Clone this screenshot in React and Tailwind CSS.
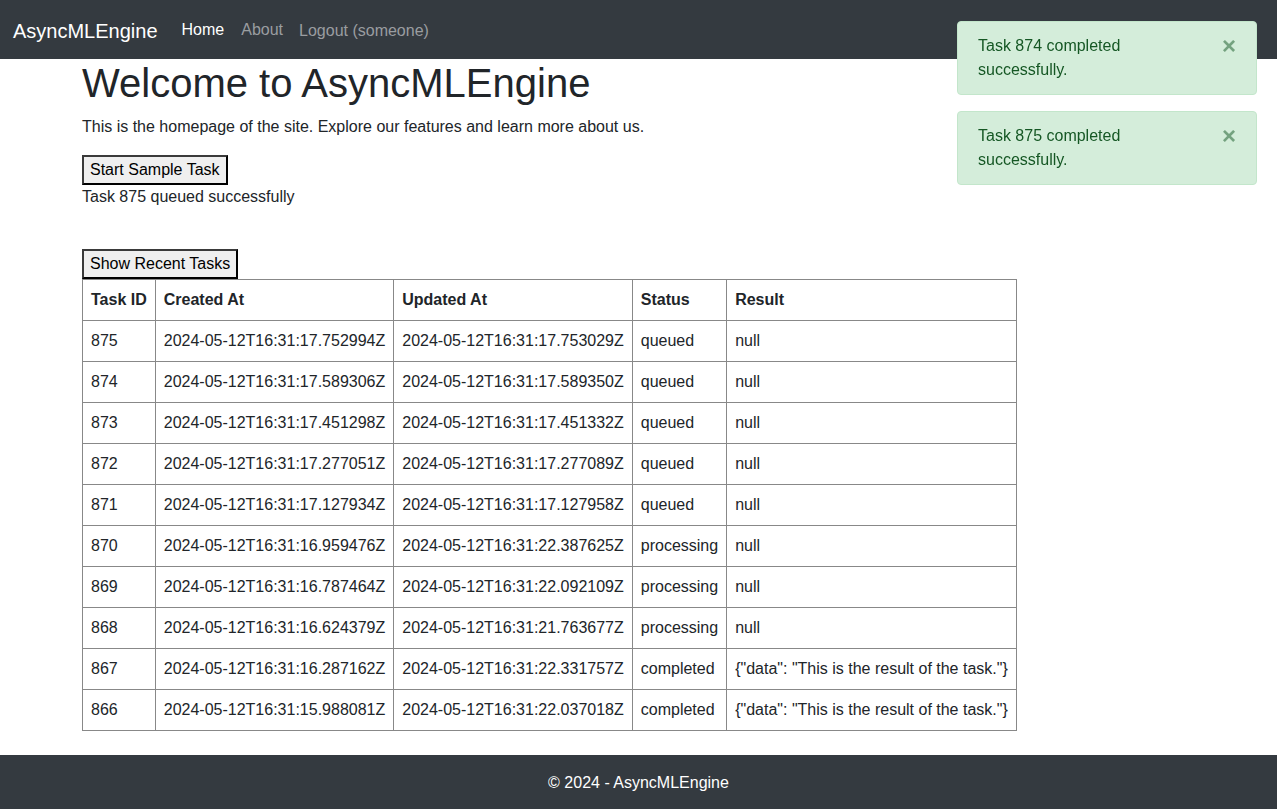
import React from 'react';

const tasks = [
  { id: 875, created: '2024-05-12T16:31:17.752994Z', updated: '2024-05-12T16:31:17.753029Z', status: 'queued', result: 'null' },
  { id: 874, created: '2024-05-12T16:31:17.589306Z', updated: '2024-05-12T16:31:17.589350Z', status: 'queued', result: 'null' },
  { id: 873, created: '2024-05-12T16:31:17.451298Z', updated: '2024-05-12T16:31:17.451332Z', status: 'queued', result: 'null' },
  { id: 872, created: '2024-05-12T16:31:17.277051Z', updated: '2024-05-12T16:31:17.277089Z', status: 'queued', result: 'null' },
  { id: 871, created: '2024-05-12T16:31:17.127934Z', updated: '2024-05-12T16:31:17.127958Z', status: 'queued', result: 'null' },
  { id: 870, created: '2024-05-12T16:31:16.959476Z', updated: '2024-05-12T16:31:22.387625Z', status: 'processing', result: 'null' },
  { id: 869, created: '2024-05-12T16:31:16.787464Z', updated: '2024-05-12T16:31:22.092109Z', status: 'processing', result: 'null' },
  { id: 868, created: '2024-05-12T16:31:16.624379Z', updated: '2024-05-12T16:31:21.763677Z', status: 'processing', result: 'null' },
  { id: 867, created: '2024-05-12T16:31:16.287162Z', updated: '2024-05-12T16:31:22.331757Z', status: 'completed', result: '{"data": "This is the result of the task."}' },
  { id: 866, created: '2024-05-12T16:31:15.988081Z', updated: '2024-05-12T16:31:22.037018Z', status: 'completed', result: '{"data": "This is the result of the task."}' },
];

const toasts = ['Task 874 completed successfully.', 'Task 875 completed successfully.'];

const Toast = ({ text }) => (
  <div className="relative w-[300px] mb-4 py-3 pl-5 pr-16 bg-[#d4edda] border border-[#c3e6cb] rounded text-[#155724] leading-6">
    {text}
    <button className="absolute top-0 right-0 py-3 px-5 text-2xl leading-none font-bold text-[#74a27f]">
      ×
    </button>
  </div>
);

const PlainButton = ({ children }) => (
  <button className="block px-[6px] py-px bg-[#efefef] border-2 border-[#3a3a3a] border-r-black border-b-black text-black leading-6">
    {children}
  </button>
);

const Th = ({ children }) => (
  <th className="border border-[#888] p-2 text-left font-bold">{children}</th>
);

const Td = ({ children }) => (
  <td className="border border-[#888] p-2 whitespace-nowrap">{children}</td>
);

export default function App() {
  return (
    <div className="font-['Liberation_Sans',Arial,sans-serif] text-base leading-6 text-[#212529] bg-white">
      <nav className="h-[59px] bg-[#343a40] flex items-center pl-[13px]">
        <span className="text-xl text-white mr-4 pt-[2px]">AsyncMLEngine</span>
        <a className="px-2 text-white">Home</a>
        <a className="px-2 ml-px text-[#9a9da0]">About</a>
        <a className="px-2 text-[#9a9da0] pt-[3px]">Logout (someone)</a>
      </nav>

      <main className="w-[1113px] mx-auto">
        <h1 className="text-[40px] leading-[48px] font-medium mb-2">Welcome to AsyncMLEngine</h1>
        <p className="mb-4">This is the homepage of the site. Explore our features and learn more about us.</p>

        <PlainButton>Start Sample Task</PlainButton>
        <p className="mb-10">Task 875 queued successfully</p>

        <PlainButton>Show Recent Tasks</PlainButton>
        <table className="border-collapse">
          <thead>
            <tr>
              <Th>Task ID</Th>
              <Th>Created At</Th>
              <Th>Updated At</Th>
              <Th>Status</Th>
              <Th>Result</Th>
            </tr>
          </thead>
          <tbody>
            {tasks.map((t) => (
              <tr key={t.id}>
                <Td>{t.id}</Td>
                <Td>{t.created}</Td>
                <Td>{t.updated}</Td>
                <Td>{t.status}</Td>
                <Td>{t.result}</Td>
              </tr>
            ))}
          </tbody>
        </table>
      </main>

      <footer className="mt-[24px] h-[54px] pt-px bg-[#343a40] flex items-center justify-center text-white">
        © 2024 - AsyncMLEngine
      </footer>

      <div className="fixed top-[21px] right-[20px]">
        {toasts.map((t) => (
          <Toast key={t} text={t} />
        ))}
      </div>
    </div>
  );
}
